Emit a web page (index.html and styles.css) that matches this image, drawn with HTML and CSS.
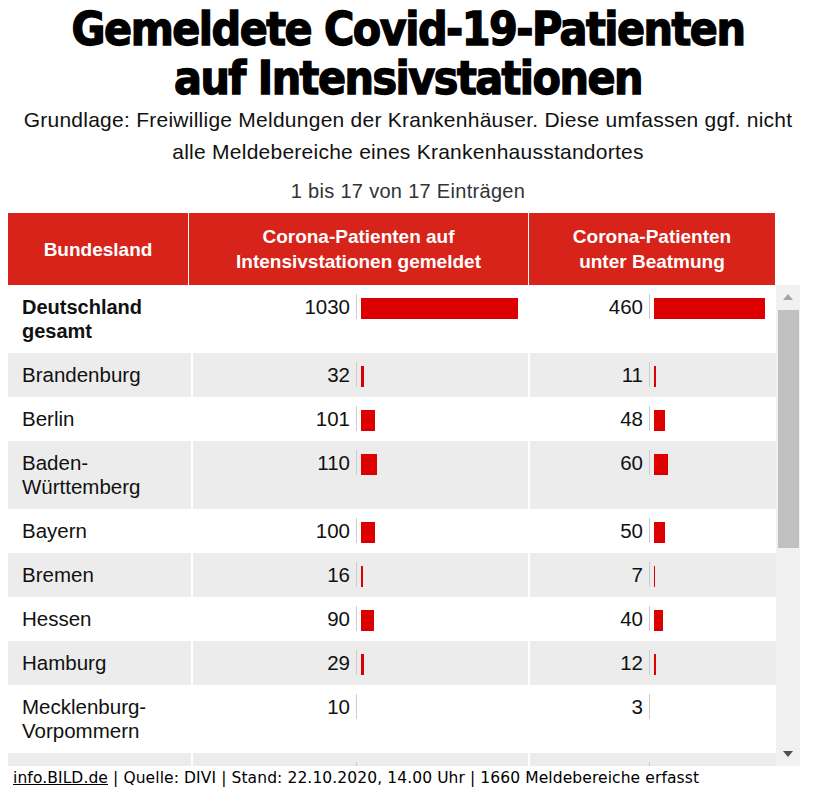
FILE: index.html
```html
<!DOCTYPE html>
<html lang="de">
<head>
<meta charset="utf-8">
<title>Gemeldete Covid-19-Patienten auf Intensivstationen</title>
<link rel="stylesheet" href="styles.css">
</head>
<body>
<div class="widget">
  <h1 class="title">Gemeldete Covid-19-Patienten<br>auf Intensivstationen</h1>
  <p class="subtitle">Grundlage: Freiwillige Meldungen der Krankenhäuser. Diese umfassen ggf. nicht<br>alle Meldebereiche eines Krankenhausstandortes</p>
  <p class="count">1 bis 17 von 17 Einträgen</p>

  <div class="table">
    <div class="thead">
      <div class="th">Bundesland</div>
      <div class="th">Corona-Patienten auf<br>Intensivstationen gemeldet</div>
      <div class="th">Corona-Patienten<br>unter Beatmung</div>
    </div>
    <div class="tbody-wrap">
      <div class="tbody">
        <div class="row">
          <div class="cell name strong">Deutschland gesamt</div>
          <div class="cell val c2"><span class="num">1030</span><span class="sep"></span><span class="barbox"><span class="bar" style="width:157px"></span></span></div>
          <div class="cell val c3"><span class="num">460</span><span class="sep"></span><span class="barbox"><span class="bar" style="width:111px"></span></span></div>
        </div>
        <div class="row alt">
          <div class="cell name">Brandenburg</div>
          <div class="cell val c2"><span class="num">32</span><span class="sep"></span><span class="barbox"><span class="bar" style="width:3.4px"></span></span></div>
          <div class="cell val c3"><span class="num">11</span><span class="sep"></span><span class="barbox"><span class="bar" style="width:1.9px"></span></span></div>
        </div>
        <div class="row">
          <div class="cell name">Berlin</div>
          <div class="cell val c2"><span class="num">101</span><span class="sep"></span><span class="barbox"><span class="bar" style="width:14px"></span></span></div>
          <div class="cell val c3"><span class="num">48</span><span class="sep"></span><span class="barbox"><span class="bar" style="width:10.9px"></span></span></div>
        </div>
        <div class="row alt">
          <div class="cell name">Baden-<br>Württemberg</div>
          <div class="cell val c2"><span class="num">110</span><span class="sep"></span><span class="barbox"><span class="bar" style="width:15.8px"></span></span></div>
          <div class="cell val c3"><span class="num">60</span><span class="sep"></span><span class="barbox"><span class="bar" style="width:13.6px"></span></span></div>
        </div>
        <div class="row">
          <div class="cell name">Bayern</div>
          <div class="cell val c2"><span class="num">100</span><span class="sep"></span><span class="barbox"><span class="bar" style="width:13.9px"></span></span></div>
          <div class="cell val c3"><span class="num">50</span><span class="sep"></span><span class="barbox"><span class="bar" style="width:11.2px"></span></span></div>
        </div>
        <div class="row alt">
          <div class="cell name">Bremen</div>
          <div class="cell val c2"><span class="num">16</span><span class="sep"></span><span class="barbox"><span class="bar" style="width:1.6px"></span></span></div>
          <div class="cell val c3"><span class="num">7</span><span class="sep"></span><span class="barbox"><span class="bar" style="width:1px"></span></span></div>
        </div>
        <div class="row">
          <div class="cell name">Hessen</div>
          <div class="cell val c2"><span class="num">90</span><span class="sep"></span><span class="barbox"><span class="bar" style="width:12.6px"></span></span></div>
          <div class="cell val c3"><span class="num">40</span><span class="sep"></span><span class="barbox"><span class="bar" style="width:9px"></span></span></div>
        </div>
        <div class="row alt">
          <div class="cell name">Hamburg</div>
          <div class="cell val c2"><span class="num">29</span><span class="sep"></span><span class="barbox"><span class="bar" style="width:2.9px"></span></span></div>
          <div class="cell val c3"><span class="num">12</span><span class="sep"></span><span class="barbox"><span class="bar" style="width:2.2px"></span></span></div>
        </div>
        <div class="row">
          <div class="cell name">Mecklenburg-<br>Vorpommern</div>
          <div class="cell val c2"><span class="num">10</span><span class="sep"></span><span class="barbox"><span class="bar" style="width:0px"></span></span></div>
          <div class="cell val c3"><span class="num">3</span><span class="sep"></span><span class="barbox"><span class="bar" style="width:0px"></span></span></div>
        </div>
        <div class="row alt" aria-hidden="true">
          <div class="cell name"></div>
          <div class="cell val c2"><span class="num"></span><span class="sep"></span><span class="barbox"><span class="bar" style="width:9.9px"></span></span></div>
          <div class="cell val c3"><span class="num"></span><span class="sep"></span><span class="barbox"><span class="bar" style="width:7.8px"></span></span></div>
        </div>
      </div>
      <div class="scrollbar" aria-hidden="true">
        <div class="sb-btn"><span class="arrow-up"></span></div>
        <div class="sb-track"><div class="sb-thumb"></div></div>
        <div class="sb-btn"><span class="arrow-down"></span></div>
      </div>
    </div>
  </div>

  <p class="footer"><a class="src" href="#">info.BILD.de</a> | Quelle: DIVI | Stand: 22.10.2020, 14.00 Uhr | 1660 Meldebereiche erfasst</p>
</div>
</body>
</html>
```

FILE: styles.css
```css
html, body {
  margin: 0;
  padding: 0;
  background: #ffffff;
}

body {
  padding: 8px;
  font-family: "Liberation Sans", Arial, sans-serif;
  color: #111111;
}

.widget {
  width: 800px;
}

.title {
  margin: -3px 0 0 0;
  font-family: "Liberation Sans Narrow", "DejaVu Sans Condensed", "Liberation Sans", sans-serif;
  font-weight: 700;
  font-size: 46px;
  line-height: 49px;
  letter-spacing: -1.5px;
  text-align: center;
  color: #000000;
  -webkit-text-stroke: 1.3px #000000;
}

.subtitle {
  margin: 1px 0 0 0;
  font-size: 21px;
  line-height: 32px;
  letter-spacing: 0.25px;
  text-align: center;
  color: #111111;
}

.count {
  margin: 11px 0 0 0;
  font-size: 20px;
  line-height: 24px;
  letter-spacing: 0.3px;
  text-align: center;
  color: #333333;
}

.table {
  margin-top: 10px;
}

.thead {
  display: grid;
  grid-template-columns: 180px 339px 246px;
  column-gap: 1px;
  width: 767px;
  height: 72px;
  background: #ffffff;
}

.th {
  display: flex;
  align-items: center;
  justify-content: center;
  text-align: center;
  background: #d8231b;
  color: #ffffff;
  font-weight: 700;
  font-size: 19px;
  line-height: 25px;
}

.tbody-wrap {
  display: flex;
  height: 481px;
  width: 792px;
}

.tbody {
  width: 768px;
  overflow: hidden;
}

.row {
  display: grid;
  grid-template-columns: 183px 335px 246px;
  column-gap: 2px;
  background: #ffffff;
}

.row.alt .cell {
  background: #ececec;
}

.cell {
  min-height: 24px;
  padding: 10px 14px 10px 14px;
  font-size: 20.5px;
  line-height: 24px;
  color: #111111;
}

.cell.strong {
  font-weight: 700;
  font-size: 20px;
}

.cell.val {
  display: flex;
  align-items: flex-start;
  padding: 10px 0 10px 0;
}

.num {
  flex: none;
  min-height: 24px;
  text-align: right;
  padding-right: 6px;
  box-sizing: border-box;
}

.c2 .num {
  width: 163px;
}

.c3 .num {
  width: 119px;
}

.sep {
  flex: none;
  width: 1px;
  height: 25px;
  margin-top: -1px;
  background: #cccccc;
}

.barbox {
  display: flex;
  padding-left: 4px;
  margin-top: 3px;
}

.bar {
  display: block;
  height: 21px;
  background: #dd0000;
}

.scrollbar {
  width: 24px;
  display: flex;
  flex-direction: column;
  background: #f1f1f1;
}

.sb-btn {
  height: 24px;
  flex: none;
  display: flex;
  align-items: center;
  justify-content: center;
}

.arrow-up {
  width: 0;
  height: 0;
  border-left: 5.5px solid transparent;
  border-right: 5.5px solid transparent;
  border-bottom: 6px solid #a3a3a3;
}

.arrow-down {
  width: 0;
  height: 0;
  border-left: 5.5px solid transparent;
  border-right: 5.5px solid transparent;
  border-top: 6px solid #505050;
}

.sb-track {
  flex: 1;
  padding: 1px 1px 0 2px;
}

.sb-thumb {
  height: 238px;
  background: #c1c1c1;
}

.footer {
  margin: 3px 0 0 5px;
  font-family: "DejaVu Sans", "Liberation Sans", sans-serif;
  font-size: 15.5px;
  line-height: 18px;
  letter-spacing: 0.1px;
  color: #000000;
}

.src {
  color: #000000;
  text-decoration: underline;
}
```
